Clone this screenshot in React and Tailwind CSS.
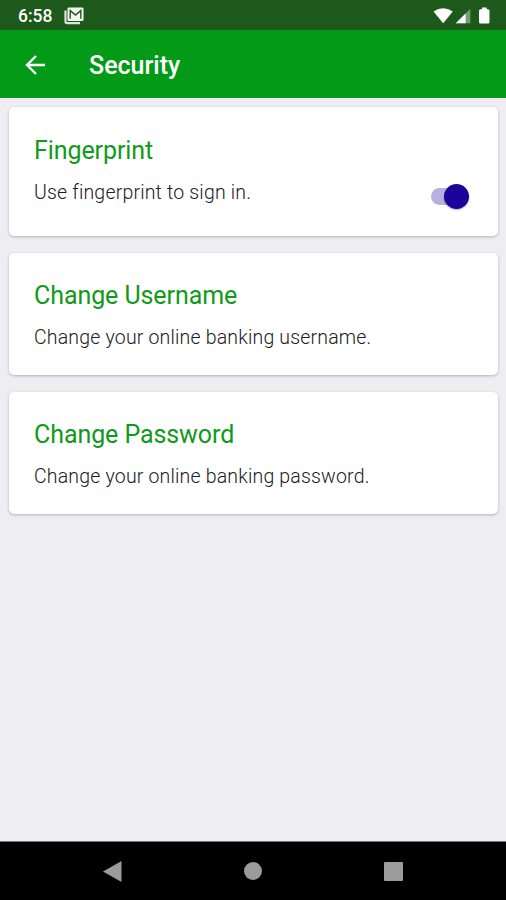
function StatusBar() {
  return (
    <div className="flex h-[30px] shrink-0 items-center bg-[#1d591a] pl-[18px] pr-[15px] text-white">
      <span className="text-[17.5px] font-medium leading-[30px] pt-[2px]">6:58</span>
      <svg className="ml-[12px] mt-px" width="20" height="18" viewBox="0 0 20 18" fill="none">
        <path d="M1.5 3.5V14.6Q1.5 16.1 3 16.1H16" stroke="#dce6da" strokeWidth="2.2" />
        <rect x="3.5" y="0.5" width="16" height="13.6" rx="1.3" fill="#f4f8f3" />
        <path d="M6.2 11.8V3.6L11.5 8L16.8 3.6V11.8" stroke="#1d591a" strokeWidth="1.4" />
      </svg>
      <svg className="ml-auto mt-px" width="58" height="18" viewBox="0 0 58 18" fill="white">
        <path d="M0.5 4.6Q10 -2.1 19.8 4.6L10.2 16.2Z" />
        <path d="M37.3 1.8V16.2H22.8Z" fillOpacity=".4" />
        <path d="M32.6 6.5V16.2H22.8Z" />
        <path d="M47.5 2.2H49V.6H53.6V2.2H55Q56.5 2.2 56.5 3.7V15Q56.5 16.5 55 16.5H47.5Q46 16.5 46 15V3.7Q46 2.2 47.5 2.2Z" />
      </svg>
    </div>
  );
}

function Header() {
  return (
    <header className="flex h-[68px] shrink-0 items-center bg-[#029a17] pl-[25px] text-white">
      <svg className="mt-px" width="20" height="20" viewBox="0 0 20 20" fill="none" stroke="currentColor" strokeWidth="2.4">
        <path d="M20 10H2M11 1L2 10L11 19" />
      </svg>
      <h1 className="ml-[44px] pt-[4px] text-[25px] font-medium leading-[30px]">Security</h1>
    </header>
  );
}

function Card({ title, text, className, headingClass, children }) {
  return (
    <section className={`flex justify-between rounded-[5px] bg-white pl-[25px] pr-[29px] shadow-[0_1px_3px_rgba(0,0,0,0.25)] ${className}`}>
      <div className={headingClass}>
        <h2 className="text-[25px] leading-[34px] tracking-[-0.08px] text-[#109a1a]">{title}</h2>
        <p className="mt-[10px] whitespace-nowrap text-[19.5px] font-light leading-[30px] tracking-[0.18px] text-[#202020]">{text}</p>
      </div>
      {children}
    </section>
  );
}

function Toggle() {
  return (
    <div className="mt-[76px] flex h-[26px] w-[38px] items-center justify-end" role="switch" aria-checked="true">
      <div className="h-[17px] w-[27px] rounded-l-full bg-[#b8b0e0]" />
      <div className="-ml-[14px] size-[25px] shrink-0 rounded-full bg-[#1b039c] shadow-[0_1px_2px_rgba(0,0,0,0.3)]" />
    </div>
  );
}

export default function App() {
  return (
    <div className="flex h-[900px] w-[506px] flex-col overflow-hidden bg-[#eeedf2] font-['Roboto',sans-serif]">
      <StatusBar />
      <Header />
      <main className="flex grow flex-col border-t border-[#f8f8fa] pl-[9px] pr-[8px] pt-[8px]">
        <Card title="Fingerprint" text="Use fingerprint to sign in." className="h-[129px]" headingClass="pt-[27px]">
          <Toggle />
        </Card>
        <Card title="Change Username" text="Change your online banking username." className="mt-[17px] h-[122px]" headingClass="pt-[26px]" />
        <Card title="Change Password" text="Change your online banking password." className="mt-[17px] h-[122px]" headingClass="pt-[26px]" />
      </main>
      <nav className="flex h-[59px] shrink-0 items-center justify-between border-t border-[#777] bg-black px-[103px] text-[#9b9b9b]">
        <svg width="19" height="21" viewBox="0 0 19 21" fill="currentColor"><path d="M0 10.5L18.5 0V21Z" /></svg>
        <div className="size-[18px] rounded-full bg-[#9b9b9b]" />
        <div className="size-[19px] rounded-[1px] bg-[#9b9b9b]" />
      </nav>
    </div>
  );
}
